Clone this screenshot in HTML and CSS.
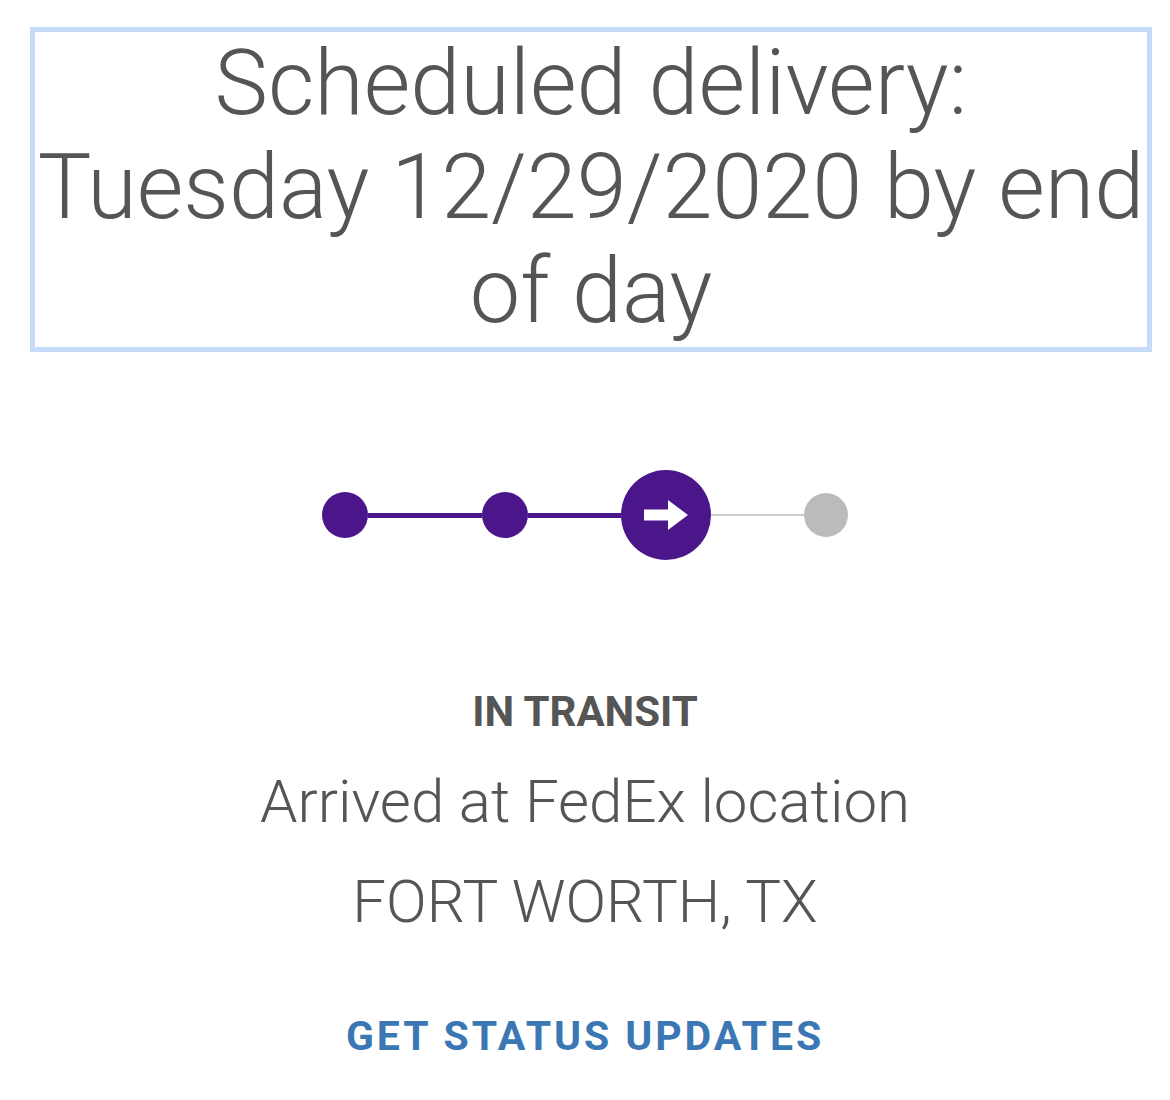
FILE: index.html
```html
<!DOCTYPE html>
<html lang="en">
<head>
    <meta charset="UTF-8">
    <meta name="viewport" content="width=device-width, initial-scale=1.0">
    <title>Track shipment</title>
    <link rel="stylesheet" href="styles.css">
</head>
<body>
    <div class="delivery-box">
        <h1>Scheduled delivery:<br>Tuesday 12/29/2020 by end of day</h1>
    </div>

    <!-- Progress tracker -->
    <div class="tracker">
        <span class="dot done"></span>
        <span class="line done wide"></span>
        <span class="dot done"></span>
        <span class="line done"></span>
        <span class="current">
            <svg width="46" height="32" viewBox="0 0 46 32">
                <path d="M1 10.5 H25 V1 L45 16 L25 31 V21.5 H1 Z" fill="#fff"/>
            </svg>
        </span>
        <span class="line"></span>
        <span class="dot"></span>
    </div>

    <div class="status">
        <p class="status-title">IN TRANSIT</p>
        <p class="status-text first">Arrived at FedEx location</p>
        <p class="status-text">FORT WORTH, TX</p>
        <a href="#" class="updates-link">GET STATUS UPDATES</a>
    </div>
</body>
</html>
```

FILE: styles.css
```css
/* Page */
body {
    margin: 0;
    background: #fff;
    font-family: Roboto, "Liberation Sans", sans-serif;
    color: #555;
}
.delivery-box {
    margin: 27px 18px 0 30px;
    height: 315px;
    border: 5px solid #c5dbf9;
    text-align: center;
}
.delivery-box h1 {
    margin: 0;
    font-size: 90px;
    font-weight: 300;
    line-height: 104px;
}

/* Progress tracker */
.tracker {
    display: flex;
    align-items: center;
    justify-content: center;
    margin-top: 118px;
}
.dot {
    width: 44px;
    height: 44px;
    border-radius: 50%;
    background: #bbb;
}
.dot.done {
    width: 46px;
    height: 46px;
    background: #4b168a;
}
.line {
    width: 93px;
    height: 2px;
    background: #ccc;
}
.line.done {
    height: 5px;
    background: #4b168a;
}
.line.wide {
    width: 114px;
}
.current {
    width: 90px;
    height: 90px;
    border-radius: 50%;
    background: #4b168a;
    display: flex;
    align-items: center;
    justify-content: center;
}

/* Status */
.status {
    text-align: center;
    margin-top: 127px;
}
.status p {
    margin: 0;
}
.status-title {
    font-size: 42px;
    font-weight: 700;
    line-height: 50px;
}
.status-text {
    font-size: 60px;
    font-weight: 300;
    line-height: 100px;
}
.status-text.first {
    margin-top: 15px;
}
.updates-link {
    display: inline-block;
    margin-top: 60px;
    font-size: 41px;
    font-weight: 700;
    letter-spacing: 2.9px;
    color: #3a77b3;
    text-decoration: none;
}
```
